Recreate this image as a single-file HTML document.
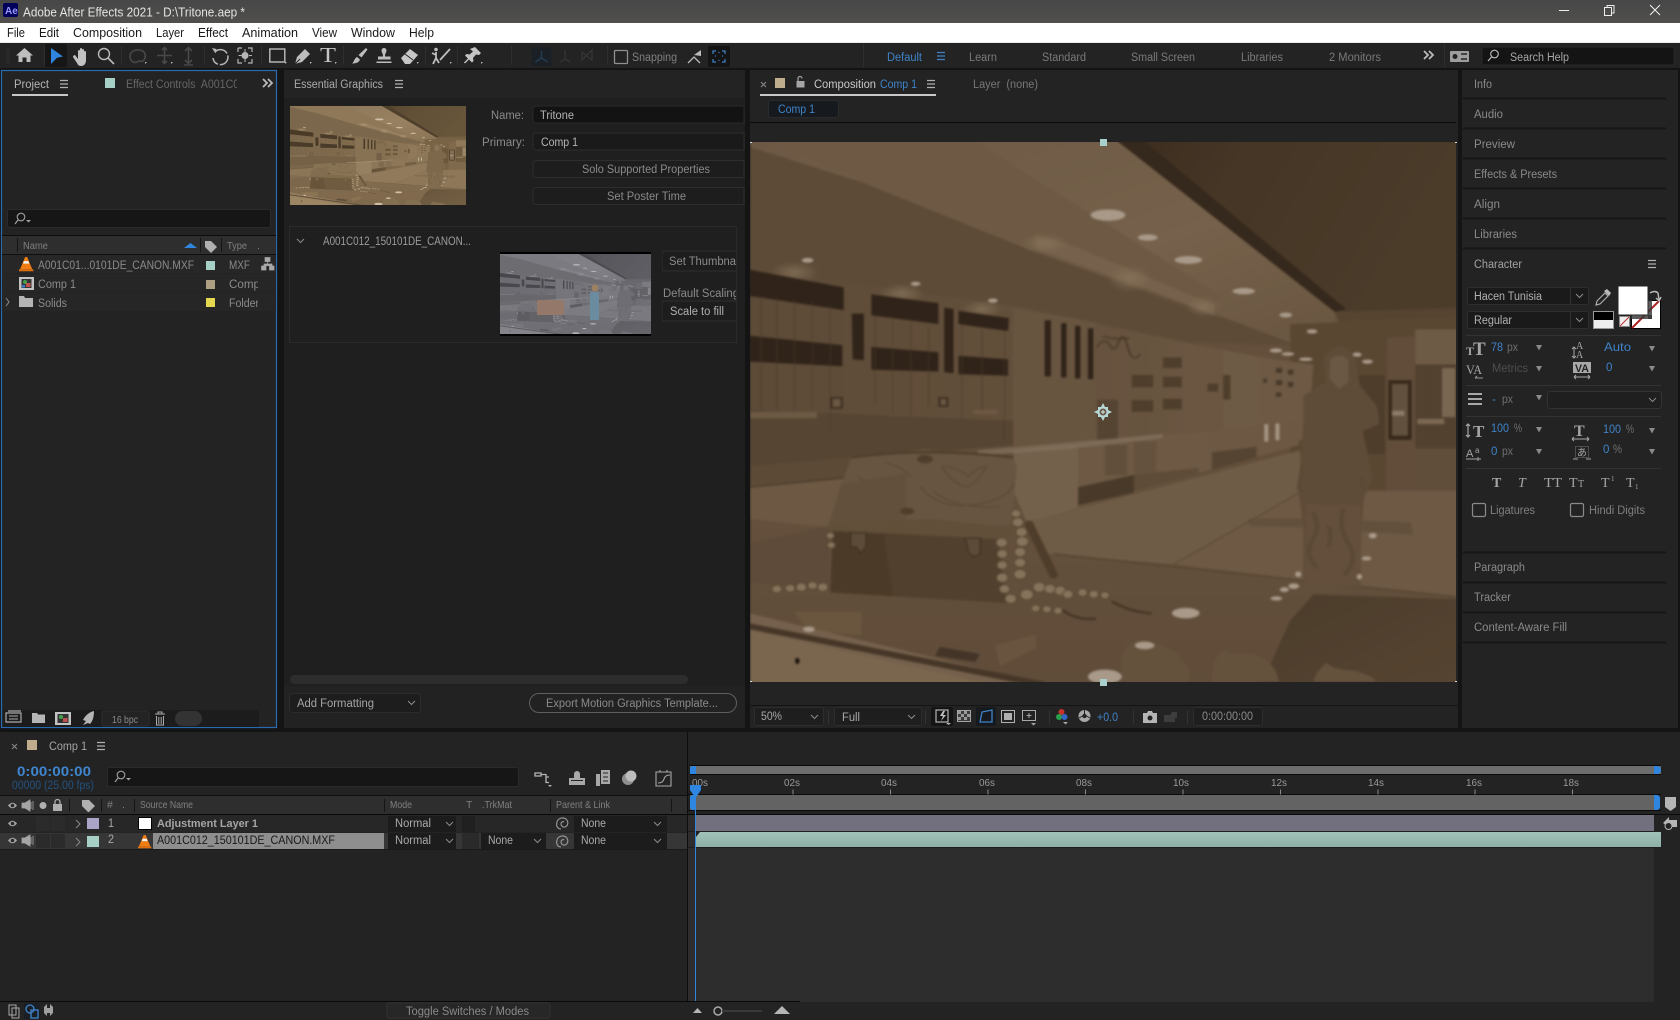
<!DOCTYPE html>
<html lang="en"><head><meta charset="utf-8"><title>Adobe After Effects 2021 - D:\Tritone.aep *</title>
<style>
html,body{margin:0;padding:0;background:#151515;width:1680px;height:1020px;overflow:hidden}
svg{display:block}
text{font-family:"Liberation Sans",sans-serif;font-size:11.5px;fill:#8a8a8a;white-space:pre}
.m{font-size:12.5px;fill:#1a1a1a}
.b{fill:#3f83c9}
.l{fill:#a8a8a8}
.d{fill:#6f6f6f}
.h{font-size:10.5px;fill:#808080}
.s{font-family:"Liberation Serif",serif;font-weight:bold;fill:#a5a5a5}
</style></head><body>
<svg xmlns="http://www.w3.org/2000/svg" width="1680" height="1020" viewBox="0 0 1680 1020">
<defs>
<linearGradient id="gt" x1="0" y1="0" x2="0" y2="1"><stop offset="0" stop-color="#474747"/><stop offset="1" stop-color="#504f4d"/></linearGradient>
<linearGradient id="gw" x1="0" y1="0" x2="1" y2="0"><stop offset="0" stop-color="#675540"/><stop offset=".5" stop-color="#6f5b44"/><stop offset="1" stop-color="#7e6a52"/></linearGradient>
<linearGradient id="gb" x1="0" y1="0" x2="1" y2="1"><stop offset="0" stop-color="#7b6750"/><stop offset=".6" stop-color="#88735a"/><stop offset="1" stop-color="#77634b"/></linearGradient>
<linearGradient id="gc" x1="0" y1="0" x2="1" y2=".3"><stop offset="0" stop-color="#3a2d1f"/><stop offset=".35" stop-color="#483928"/><stop offset="1" stop-color="#50412d"/></linearGradient>
<linearGradient id="gg" x1="0" y1="0" x2="0" y2="1"><stop offset="0" stop-color="#705c46"/><stop offset="1" stop-color="#6a5641"/></linearGradient>
<linearGradient id="gx" x1="0" y1="0" x2="1" y2="1"><stop offset="0" stop-color="#50412f"/><stop offset="1" stop-color="#5f4d38"/></linearGradient>
<radialGradient id="gl"><stop offset="0" stop-color="#a08c70" stop-opacity=".75"/><stop offset="1" stop-color="#a08c70" stop-opacity="0"/></radialGradient>
<linearGradient id="gteal" x1="0" y1="0" x2="0" y2="1"><stop offset="0" stop-color="#a1c2b9"/><stop offset="1" stop-color="#8fb0a7"/></linearGradient>
<filter id="fm" filterUnits="userSpaceOnUse" x="740" y="130" width="730" height="565" color-interpolation-filters="sRGB"><feGaussianBlur stdDeviation="1"/><feColorMatrix type="matrix" values=".76 0 0 0 .057  0 .76 0 0 .04  0 0 .76 0 .028  0 0 0 1 0"/></filter>
<filter id="fp" color-interpolation-filters="sRGB"><feColorMatrix type="matrix" values=".85 0 0 0 .14  0 .85 0 0 .12  0 0 .85 0 .08  0 0 0 1 0"/></filter>
<filter id="fg" color-interpolation-filters="sRGB"><feColorMatrix type="matrix" values=".21 .42 .07 0 .18  .21 .42 .07 0 .18  .21 .42 .08 0 .2  0 0 0 1 0"/></filter>
<clipPath id="cm"><rect x="750" y="142" width="706" height="540"/></clipPath>
<clipPath id="cp"><rect x="290" y="106" width="176" height="99"/></clipPath>
<clipPath id="cg"><rect x="500" y="254" width="151" height="80"/></clipPath>
<clipPath id="c1"><rect x="120" y="70" width="117" height="24"/></clipPath>
<clipPath id="c2"><rect x="662" y="250" width="74" height="75"/></clipPath>
<clipPath id="c3"><rect x="225" y="274" width="33" height="38"/></clipPath>
<g id="ham" fill="none" stroke-width="1.2"><path d="M0 .5h8M0 4h8M0 7.5h8"/></g>
<path id="chev" d="M0 0l3.5 3.5L7 0" fill="none" stroke="#8c8c8c" stroke-width="1"/>
<polygon id="tri" points="0,0 6,0 3,5.5" fill="#8a8a8a"/>
<g id="eye"><path d="M0 4.5Q4.5 -1 9 4.5 4.5 10 0 4.5z" fill="#a5a5a5"/><circle cx="4.5" cy="4.5" r="1.8" fill="#2a2a2a"/></g>
<g id="cone"><polygon points="6,0 8,0 13,12 1,12" fill="#f07d14"/><polygon points="4.7,4 9.3,4 10,6.5 4,6.5" fill="#f3f3f3"/><rect x="0" y="12" width="14" height="2" fill="#e06f10"/></g>
<g id="spiral" fill="none" stroke="#9a9a9a" stroke-width="1.1"><path d="M5 12C1 12 0 8 1 5 2 1 7 0 10 2c3 3 2 7-1 8-2 .5-4-1-4-3 0-2 2-3 3-2"/></g>

<g id="photo">
<rect x="0" y="0" width="1600" height="1568" fill="#6f5b44"/>
<polygon points="0,370 600,480 980,580 1240,640 1240,870 600,885 0,935" fill="url(#gw)"/>
<polygon points="0,770 590,800 590,870 0,935" fill="#5f4e3a"/>
<polygon points="590,480 775,520 775,860 590,875" fill="#76624b"/>
<polygon points="980,580 1060,600 1060,820 980,840" fill="#78644c"/>
<polygon points="1060,600 1140,620 1140,815 1060,825" fill="#7e6a52"/>
<polygon points="0,20 250,120 620,310 1000,490 1150,540 1215,585 980,575 600,475 0,372" fill="#675540"/>
<polygon points="0,0 820,0 1310,490 1310,520 1215,580 1050,500 620,310 250,120 0,20" fill="url(#gb)"/>
<polygon points="290,0 500,0 1050,440 1045,500 620,310 250,120 50,0" fill="#7d6950"/>
<polygon points="640,270 720,300 1040,470 1040,500 900,430 640,310" fill="#88735a"/>
<polygon points="820,0 1600,0 1600,480 1310,490" fill="url(#gc)"/>
<polygon points="820,0 880,0 1335,482 1310,490" fill="#33271b"/>
<polygon points="1310,490 1600,478 1600,505 1320,518" fill="#5e4c37"/>
<polygon points="1210,525 1600,505 1600,1040 1210,1040" fill="#635039"/>
<polygon points="1140,620 1262,640 1250,860 1140,830" fill="#7c6850"/>
<path d="M1178 650h14v14h-14zM1205 655h12v14h-12zM1178 685h14v14h-14zM1205 690h12v14h-12zM1150 680h8v12h-8zM1178 720h12v12h-12z" fill="#4c3d2c"/>
<rect x="1490" y="540" width="110" height="100" fill="#7e6a52"/>
<rect x="1490" y="640" width="110" height="240" fill="#5a4835"/>
<rect x="1490" y="880" width="110" height="125" fill="#6d5943"/>
<rect x="1550" y="650" width="30" height="140" fill="#8d7a62"/>
<rect x="1495" y="795" width="60" height="15" fill="#917d64"/>
<polygon points="1428,565 1490,560 1490,1005 1425,1005" fill="#6c5843"/>
<rect x="1430" y="685" width="52" height="170" fill="#352819"/>
<rect x="1438" y="695" width="36" height="148" fill="#6e5d4a"/>
<rect x="1438" y="772" width="28" height="14" fill="#a5957f"/>
<rect x="1362" y="670" width="60" height="225" fill="#54432f"/>
<ellipse cx="100" cy="378" rx="55" ry="32" fill="url(#gl)"/><ellipse cx="340" cy="438" rx="50" ry="30" fill="url(#gl)"/><ellipse cx="520" cy="482" rx="45" ry="26" fill="url(#gl)"/><ellipse cx="850" cy="395" rx="50" ry="40" fill="url(#gl)"/><ellipse cx="1015" cy="475" rx="40" ry="30" fill="url(#gl)"/><ellipse cx="660" cy="295" rx="55" ry="30" fill="url(#gl)"/>
<g fill="#2c2117">
<polygon points="0,370 210,420 210,485 0,445"/>
<polygon points="0,558 207,585 207,645 0,632"/>
<polygon points="272,440 422,465 422,525 272,500"/>
<polygon points="272,590 422,605 422,660 272,655"/>
<polygon points="228,495 255,495 255,628 230,625"/>
<polygon points="435,478 456,482 456,665 435,662"/>
<polygon points="467,487 580,508 578,545 467,525"/>
<polygon points="467,615 578,625 578,672 467,668"/>
<rect x="660" y="514" width="14" height="160"/><rect x="697" y="522" width="12" height="155"/><rect x="728" y="530" width="12" height="150"/><rect x="757" y="537" width="12" height="145"/>
</g>
<path d="M25 445V770M60 450V770M100 455V770M140 460V770M180 470V830M280 500V750M320 510V780M360 520V790M400 530V760M475 530V800M520 540V780M570 550V860" stroke="#4d3e2c" stroke-width="3" fill="none" opacity=".5"/>
<path d="M776 590q20-30 30-5t20-10 20 15 28 20M790 560q30 10 60 5" stroke="#4d3e2c" stroke-width="4" fill="none"/>
<rect x="0" y="775" width="150" height="18" fill="#7c6850"/><rect x="500" y="770" width="55" height="12" fill="#7c6850"/>
<rect x="180" y="733" width="28" height="33" fill="#3e3023"/><rect x="185" y="738" width="18" height="23" fill="#7a664e"/><rect x="422" y="733" width="22" height="28" fill="#3e3023"/><rect x="427" y="738" width="12" height="18" fill="#7a664e"/>
<g fill="#54442f"><rect x="855" y="670" width="48" height="35"/><rect x="855" y="742" width="48" height="33"/><rect x="925" y="620" width="42" height="30"/><rect x="925" y="675" width="42" height="30"/><rect x="925" y="738" width="42" height="30"/><rect x="1025" y="695" width="24" height="22"/><rect x="1060" y="670" width="16" height="70"/></g>
<rect x="778" y="740" width="46" height="115" fill="#5e4c3a"/>
<polygon points="0,930 230,905 230,960 0,990" fill="#66543f"/>
<polygon points="0,990 230,965 230,1110 0,1082" fill="#7b674f"/>
<path d="M0 990L215 962" stroke="#4c3d2c" stroke-width="3"/>
<polygon points="590,885 735,868 735,1050 620,1090 590,1000" fill="#86725b"/>
<polygon points="735,865 930,840 1030,830 1030,940 735,1048" fill="#7c6850"/>
<rect x="795" y="870" width="50" height="85" fill="#6d5a44"/><rect x="860" y="860" width="50" height="95" fill="#725f48"/>
<polygon points="735,990 860,955 860,1005 735,1042" fill="#4d3e2c"/>
<polygon points="860,955 1005,935 1005,950 860,1000" fill="#685540"/>
<polygon points="1030,830 1230,800 1230,870 1030,940" fill="#7b674f"/>
<polygon points="1035,890 1135,875 1135,905 1035,940" fill="#5e4c38"/>
<polygon points="510,885 720,862 925,838 925,850 720,880 510,900" fill="#a0907a" opacity=".6"/>
<rect x="1152" y="810" width="9" height="50" fill="#c4b6a2"/><rect x="1177" y="808" width="9" height="48" fill="#c4b6a2"/>
<polygon points="620,1090 1232,885 1240,1000 950,1210 660,1180" fill="#7f6b53"/>
<path d="M950 1210L1240 1000" stroke="#5c4b36" stroke-width="4"/>
<polygon points="950,1210 1240,1000 1600,1000 1600,1310" fill="#7c6850"/>
<polygon points="1115,1080 1240,1080 1480,1090 1485,1125 1240,1105 1120,1100" fill="#5f4d39" opacity=".45"/>
<polygon points="0,1080 660,1180 1600,1305 1600,1568 0,1568" fill="url(#gg)"/>
<path d="M680 1180L1600 1305" stroke="#5c4b36" stroke-width="4"/>
<polygon points="1210,1370 1262,1296 1600,1310 1600,1568 1140,1568" fill="url(#gx)"/>
<path d="M835 1545q-15-90 30-120 70 10 95 45 30 35 25 75zM1035 1545q-5-65 30-95 0 20 50 15 60 10 70 80zM1262 1545q5-30 30-55 10 20 60 22 45 15 50 33z" fill="#725e47"/>
<polygon points="100,1345 250,1345 250,1412 130,1400" fill="#786449"/>
<polygon points="550,1440 640,1410 640,1450 560,1500" fill="#776349"/>
<polygon points="0,1350 640,1545 600,1568 0,1400" fill="#86715a"/>
<polygon points="0,1378 660,1545 640,1558 0,1395" fill="#493a2a"/>
<polygon points="0,1398 600,1568 0,1568" fill="#8d785d"/>
<polygon points="425,1445 515,1465 505,1488 415,1470" fill="#45372a"/>
<ellipse cx="106" cy="1485" rx="5" ry="9" fill="#150e08"/>
<polygon points="0,1150 0,1260 178,1280 178,1100" fill="#665340" opacity=".7"/>
<polygon points="228,905 390,882 590,905 598,935 585,1095 540,1105 400,1085 175,1095 205,980" fill="#76634c"/>
<path d="M228 905Q390 875 590 905" stroke="#54442f" stroke-width="7" fill="none"/>
<path d="M380 985q40 70 120 55t90-60M430 930q20 50 60 60 30-30 40-60-30 10-40 30-30-30-60-30zM240 960q40 20 60 80M260 1000q50 20 70 70M300 920q40 10 60 40M410 1000q50 55 150 45" stroke="#655340" stroke-width="4" fill="none"/>
<polygon points="205,980 350,950 350,1090 178,1095" fill="#6c5a45" opacity=".7"/>
<ellipse cx="392" cy="910" rx="18" ry="12" fill="#54442f"/><ellipse cx="352" cy="1058" rx="16" ry="10" fill="#54442f"/>
<polygon points="175,1095 400,1080 585,1105 580,1135 180,1115" fill="#6c5a41"/>
<polygon points="185,1115 555,1138 575,1320 180,1290" fill="#4f3f2b"/>
<polygon points="300,1125 555,1138 575,1320 320,1300" fill="#584733"/>
<path d="M225 1120h35v40l-12 18-10-18h-13zM482 1135h34v45l-14 8-12-10z" fill="#665540" stroke="#3f3122" stroke-width="3"/>
<g fill="#9c8a6e" stroke="#5a4936" stroke-width="2"><circle cx="596" cy="1065" r="11"/><circle cx="600" cy="1090" r="13"/><circle cx="608" cy="1118" r="13"/><circle cx="610" cy="1145" r="14"/><circle cx="605" cy="1175" r="13"/><circle cx="605" cy="1205" r="13"/><circle cx="605" cy="1238" r="14"/><circle cx="564" cy="1148" r="13"/><circle cx="565" cy="1180" r="12"/><circle cx="565" cy="1212" r="12"/><circle cx="565" cy="1248" r="13"/><circle cx="570" cy="1280" r="12"/><circle cx="584" cy="1308" r="13"/><circle cx="620" cy="1296" r="15"/><circle cx="648" cy="1275" r="14"/><circle cx="672" cy="1280" r="13"/><circle cx="695" cy="1285" r="13"/><circle cx="712" cy="1295" r="12"/><circle cx="745" cy="1290" r="11"/><circle cx="770" cy="1295" r="11"/><circle cx="795" cy="1298" r="10"/><circle cx="640" cy="1335" r="10"/><circle cx="665" cy="1338" r="10"/><circle cx="690" cy="1342" r="10"/><circle cx="115" cy="1275" r="12"/><circle cx="140" cy="1270" r="11"/><circle cx="163" cy="1275" r="12"/><circle cx="90" cy="1278" r="11"/><circle cx="60" cy="1280" r="11"/><circle cx="180" cy="1128" r="9"/><circle cx="182" cy="1155" r="9"/></g>
<path d="M625 1095L680 1240" stroke="#54432e" stroke-width="20" stroke-linecap="round" stroke-dasharray="14 5"/>
<path d="M700 1340q30 30 75 25M810 1315q40 30 90 35" stroke="#4a3a28" stroke-width="7" fill="none"/>
<path d="M1285 620Q1300 590 1325 588 1352 595 1358 640L1366 700 1405 760 1410 810 1372 830 1395 960 1375 1020 1370 1100 1365 1280 1240 1260 1240 1100 1228 1000 1240 800 1240 730 1290 690z" fill="#6a5640"/>
<path d="M1300 625Q1320 605 1340 625L1340 690 1320 710 1298 680z" fill="#7a6650"/>
<path d="M1248 1040h120v230h-125z" fill="#6f5b45"/>
<path d="M1260 1060q20 40 0 80t10 80M1330 1050q-15 50 10 100t-10 90M1295 1100q10 20 0 60" stroke="#64523c" stroke-width="10" fill="none"/>
<path d="M1240 1000q-14 0-10-15l8-60M1375 1000l-8-40" stroke="#64523c" stroke-width="8" fill="none"/>
<g fill="#cbbcaa">
<ellipse cx="802" cy="214" rx="39" ry="16"/><ellipse cx="891" cy="278" rx="22" ry="9"/><ellipse cx="982" cy="342" rx="31" ry="11"/><ellipse cx="1106" cy="431" rx="25" ry="9"/><ellipse cx="1200" cy="499" rx="14" ry="7"/><ellipse cx="1259" cy="546" rx="12" ry="6"/><ellipse cx="129" cy="343" rx="13" ry="7"/><ellipse cx="371" cy="410" rx="11" ry="6"/><ellipse cx="544" cy="458" rx="11" ry="6"/><ellipse cx="976" cy="1349" rx="31" ry="15"/><ellipse cx="884" cy="1441" rx="22" ry="11"/><ellipse cx="795" cy="1530" rx="38" ry="20"/><ellipse cx="132" cy="1395" rx="13" ry="8"/><ellipse cx="1179" cy="1307" rx="13" ry="6"/><ellipse cx="1218" cy="1272" rx="12" ry="8"/><ellipse cx="1197" cy="1282" rx="10" ry="7"/><ellipse cx="1381" cy="1193" rx="11" ry="6"/><ellipse cx="1178" cy="600" rx="14" ry="6"/><ellipse cx="1205" cy="610" rx="14" ry="5"/><ellipse cx="1245" cy="625" rx="15" ry="5"/><ellipse cx="1360" cy="612" rx="10" ry="6"/><ellipse cx="1383" cy="632" rx="12" ry="6"/><ellipse cx="1395" cy="1128" rx="9" ry="8"/><ellipse cx="1228" cy="1238" rx="7" ry="8"/><ellipse cx="1365" cy="1245" rx="6" ry="8"/>
</g>
</g>
</defs>

<rect width="1680" height="1020" fill="#141414"/>
<!-- title bar -->
<rect width="1680" height="23" fill="url(#gt)"/>
<rect x="3" y="3" width="15" height="14" rx="2" fill="#00005b"/>
<text x="5" y="14" style="font-size:10px;font-weight:bold;fill:#9999ff">Ae</text>
<text x="23" y="16.5" textLength="222" lengthAdjust="spacingAndGlyphs" style="font-size:13px;fill:#e4e4e4">Adobe After Effects 2021 - D:\Tritone.aep *</text>
<path d="M1559 10.5h10" stroke="#eee" stroke-width="1"/>
<path d="M1604.5 7.5h7v8h-7zM1607 7.5V5.5h7v7.5h-2.5" fill="none" stroke="#eee" stroke-width="1"/>
<path d="M1650 5l10 10M1660 5l-10 10" stroke="#eee" stroke-width="1"/>
<!-- menu -->
<rect y="23" width="1680" height="19" fill="#fff"/><rect y="42" width="1680" height="1" fill="#ececec"/>
<g>
<text class="m" x="7" y="37" textLength="18" lengthAdjust="spacingAndGlyphs">File</text>
<text class="m" x="39" y="37" textLength="20" lengthAdjust="spacingAndGlyphs">Edit</text>
<text class="m" x="73" y="37" textLength="69" lengthAdjust="spacingAndGlyphs">Composition</text>
<text class="m" x="156" y="37" textLength="28" lengthAdjust="spacingAndGlyphs">Layer</text>
<text class="m" x="198" y="37" textLength="30" lengthAdjust="spacingAndGlyphs">Effect</text>
<text class="m" x="242" y="37" textLength="56" lengthAdjust="spacingAndGlyphs">Animation</text>
<text class="m" x="312" y="37" textLength="25" lengthAdjust="spacingAndGlyphs">View</text>
<text class="m" x="351" y="37" textLength="44" lengthAdjust="spacingAndGlyphs">Window</text>
<text class="m" x="409" y="37" textLength="25" lengthAdjust="spacingAndGlyphs">Help</text>
</g>
<!-- toolbar -->
<rect y="43" width="1680" height="25" fill="#232323"/>
<rect x="45" y="44" width="22" height="23" rx="2" fill="#161616"/>
<path d="M7 49v16M9 49v16" stroke="#3a3a3a" stroke-dasharray="1 1"/>
<path d="M44.500 46v19M121.500 46v19M204.500 46v19M261.500 46v19M343.500 46v19M425.500 46v19M457.500 46v19M511.500 46v19M607.500 46v19M863.500 44v23M1444.500 44v23" stroke="#2f2f2f"/>
<path d="M24.500 48L33 55.500h-2.500V62h-4v-4.500h-4V62h-4v-6.500H16z" fill="#bdbdbd"/>
<path d="M51 48l12 8.500-6 1.200-6 6.300z" fill="#2f86e0"/>
<path d="M75 55l3 4v-8a1 1 0 012 0v5-7a1 1 0 012 0v7-6a1 1 0 012 0v6-4a1 1 0 012 0v8c0 4-2 6-5 6-2 0-3-1-4-3l-4-6c0-1 1-2 2-2z" fill="#c2c2c2"/>
<circle cx="104" cy="54" r="5.5" fill="none" stroke="#bbb" stroke-width="1.4"/><path d="M108 58l6 6" stroke="#bbb" stroke-width="1.6"/>
<g fill="none" stroke="#484848" stroke-width="1.6"><path d="M130 56c0-4 5-7 10-6s6 5 5 8-3 4-6 3c-4 3-9 1-9-5z"/><path d="M164.500 48v15M157 55.500h15M162 50l2.500-2.500L167 50M162 61l2.500 2.500L167 61"/><path d="M188.500 48v15M185 51l3.500-3.500L192 51M185 60l3.500 3.500L192 60M184 65h9" /></g>
<path d="M215 52a7.500 7.500 0 11-2 6" fill="none" stroke="#b5b5b5" stroke-width="1.5" stroke-dasharray="14 2"/><path d="M212 48l4.500 1-1 4.500z" fill="#b5b5b5"/>
<path d="M238 48h4M248 48h4v4M252 59v4h-4M242 63h-4v-4M238 52v-4" fill="none" stroke="#b5b5b5" stroke-width="1.2"/><circle cx="245" cy="55.500" r="3.500" fill="#b5b5b5"/><path d="M238.500 55.500h3M252 55.500h-3M245 49v3M245 62v-3" stroke="#b5b5b5"/>
<rect x="269.800" y="49" width="15" height="13" fill="none" stroke="#bdbdbd" stroke-width="1.4"/>
<path d="M287 62h-2v2zM312 62h-2v2zM337 62h-2v2zM419 62h-2v2zM452 62h-2v2zM483 62h-2v2zM173 62h-2v2zM147 62h-2v2z" fill="#bbb"/>
<path d="M295 64l2-7 8-8 5 5-8 8z" fill="#bdbdbd"/><path d="M295 64l5-5" stroke="#232323"/>
<text class="s" x="320" y="62" textLength="16" lengthAdjust="spacingAndGlyphs" style="font-size:21px;font-weight:normal;fill:#c4c4c4">T</text>
<path d="M366 48l1.500 1.500-6 8-3-2.500zM357 57l3 2.500c-1 3-4 4-8 4 2-1 2-5 5-6.500z" fill="#bdbdbd"/>
<path d="M384 48a2.500 2.500 0 012.500 2.500c0 2-1.500 2.500-1.500 6h5.500v3H378v-3h5c0-3.500-1.500-4-1.500-6A2.500 2.500 0 01384 48zM376.500 61.500h15v1.500h-15z" fill="#bdbdbd"/>
<path d="M401 58l9-9 8 6-8 9h-5z" fill="#c6c6c6"/><path d="M405 54l8 6" stroke="#232323"/>
<circle cx="436" cy="49.500" r="1.800" fill="#bdbdbd"/><path d="M436 52v6l-3 6M436 55l-4-2M436 58l3 5M440 60l10-11" stroke="#bdbdbd" stroke-width="1.8" fill="none"/>
<path d="M470 49l5-2 6 6-2 2-3-.5-3 3.500.5 3-1.500 1.500-3-3-4 4-1-1 4-4-3-3 1.500-1.500 3 .5 3.500-3z" fill="#c4c4c4"/>
<rect x="531.500" y="47" width="20" height="19" rx="2" fill="#1b2026"/>
<path d="M541.500 51v7M541.500 58l-6 4M541.500 58l6 4" stroke="#243d52" stroke-width="1.4"/>
<path d="M560 62l5-3 5 3M565 50v9M582 52l10 8v-10l-10 10z" stroke="#3a3a3a" fill="none"/>
<rect x="614.500" y="50.500" width="13" height="13" rx="1" fill="none" stroke="#909090" stroke-width="1.3"/>
<text class="d" x="632" y="61" textLength="45" lengthAdjust="spacingAndGlyphs" style="fill:#7f7f7f">Snapping</text>
<path d="M688 63l6-6 6 6" stroke="#bbb" stroke-width="1.3" fill="none"/><path d="M694 55l7-5v6z" fill="#bbb"/>
<rect x="708" y="46" width="22" height="21" rx="2" fill="#141414"/>
<path d="M713 54v-3h3M725 54v-3h-3M713 59v3h3M725 59v3h-3M719 52v1M719 60v1M715 56h1M722 56h1" stroke="#3f83c9" stroke-width="1.2" fill="none"/>
<text class="b" x="887" y="61" textLength="35" lengthAdjust="spacingAndGlyphs">Default</text>
<use href="#ham" x="937" y="52" stroke="#3f83c9"/>
<text x="969" y="61" textLength="28" lengthAdjust="spacingAndGlyphs" style="fill:#7a7a7a">Learn</text>
<text x="1042" y="61" textLength="44" lengthAdjust="spacingAndGlyphs" style="fill:#7a7a7a">Standard</text>
<text x="1131" y="61" textLength="64" lengthAdjust="spacingAndGlyphs" style="fill:#7a7a7a">Small Screen</text>
<text x="1241" y="61" textLength="42" lengthAdjust="spacingAndGlyphs" style="fill:#7a7a7a">Libraries</text>
<text x="1329" y="61" textLength="52" lengthAdjust="spacingAndGlyphs" style="fill:#7a7a7a">2 Monitors</text>
<path d="M1424 51l4 4-4 4M1429 51l4 4-4 4" fill="none" stroke="#bbb" stroke-width="1.8"/>
<rect x="1450" y="51" width="19" height="11" rx="1" fill="#9e9e9e"/><circle cx="1455" cy="56.500" r="2.500" fill="#232323"/><path d="M1461 54h6M1461 59h6" stroke="#232323" stroke-width="1.4"/>
<rect x="1482" y="47" width="192" height="18" rx="2" fill="#141414" stroke="#2a2a2a"/>
<circle cx="1494.500" cy="54" r="3.800" fill="none" stroke="#bbb" stroke-width="1.1"/><path d="M1491.500 57l-3.500 4" stroke="#bbb" stroke-width="1.2"/>
<text x="1510" y="61" textLength="59" lengthAdjust="spacingAndGlyphs" style="fill:#a5a5a5">Search Help</text>

<!-- project panel -->
<rect x="1.500" y="70.500" width="275" height="657" fill="#232323" stroke="#2a6bb0" stroke-width="1.2"/>
<text x="14" y="88" textLength="35" lengthAdjust="spacingAndGlyphs" style="fill:#b4b4b4">Project</text>
<use href="#ham" x="60" y="80" stroke="#b0b0b0"/>
<rect x="12" y="94" width="56" height="2" fill="#c8c8c8"/>
<rect x="105" y="78" width="10" height="10" fill="#a6cfc6"/>
<g clip-path="url(#c1)"><text x="126" y="88" textLength="125" lengthAdjust="spacingAndGlyphs" style="fill:#666">Effect Controls  A001C012</text></g>
<path d="M263 79l4 4-4 4M268 79l4 4-4 4" fill="none" stroke="#bbb" stroke-width="1.8"/>
<rect x="7.500" y="209.500" width="263" height="18" rx="2" fill="#161616" stroke="#2a2a2a"/>
<circle cx="21" cy="217" r="3.800" fill="none" stroke="#a0a0a0" stroke-width="1.1"/><path d="M18 220l-3 4" stroke="#a0a0a0" stroke-width="1.2"/><path d="M26 220h5l-2.500 2.500z" fill="#a0a0a0"/>
<rect x="2" y="235" width="274" height="1" fill="#0c0c0c"/>
<rect x="2" y="236" width="274" height="18" fill="#2e2e2e"/>
<rect x="2" y="254" width="274" height="1" fill="#0f0f0f"/>
<path d="M17.500 238v14M200.500 238v14M221.500 238v14" stroke="#151515"/>
<text class="h" x="23" y="249" textLength="25" lengthAdjust="spacingAndGlyphs">Name</text>
<polygon points="184,248 197,248 190.500,243" fill="#2f86e0"/>
<path d="M205 241l6 0 6 6-1 1-5 5-6-6z" fill="#b0b0b0"/>
<text class="h" x="227" y="249" textLength="20" lengthAdjust="spacingAndGlyphs">Type</text><text class="h" x="257" y="249">.</text>
<rect x="2" y="255" width="274" height="18" fill="#272727"/>
<rect x="2" y="274" width="274" height="18" fill="#262626"/>
<rect x="2" y="293" width="274" height="18" fill="#262626"/>
<g transform="translate(19 257) scale(1.02)"><use href="#cone"/></g>
<text x="38" y="269" textLength="156" lengthAdjust="spacingAndGlyphs">A001C01...0101DE_CANON.MXF</text>
<rect x="206" y="261" width="9" height="9" fill="#a6cfc6"/>
<text x="229" y="269" textLength="21" lengthAdjust="spacingAndGlyphs">MXF</text>
<path d="M265 257.500h5v4h-5zM261.500 266h4.500v4h-4.500zM269.500 266h4.500v4h-4.500zM267.500 261.500v2.500M264 266v-2h8v2" fill="#a8a8a8" stroke="#a8a8a8" stroke-width=".7"/>
<rect x="19" y="277" width="15" height="13" fill="#c2c2c2"/><rect x="21.500" y="279" width="10" height="9" fill="#333"/><circle cx="25" cy="282" r="2" fill="#42a14b"/><rect x="26" y="283" width="4.500" height="4" fill="#c0504d"/><rect x="22" y="285" width="3" height="2.500" fill="#3a7bd0"/>
<text x="38" y="288" textLength="38" lengthAdjust="spacingAndGlyphs">Comp 1</text>
<rect x="206" y="280" width="9" height="9" fill="#ad9f82"/>
<g clip-path="url(#c3)"><text x="229" y="288" textLength="31" lengthAdjust="spacingAndGlyphs">Comp</text>
<text x="229" y="307" textLength="30" lengthAdjust="spacingAndGlyphs">Folder</text></g>
<path d="M6 298l3 4-3 4" fill="none" stroke="#8c8c8c"/>
<path d="M19 296h5l1 2h8v9H19z" fill="#b5b5b5"/>
<text x="38" y="307" textLength="29" lengthAdjust="spacingAndGlyphs">Solids</text>
<rect x="206" y="298" width="9" height="9" fill="#e3d84f"/>
<rect x="3" y="710" width="256" height="17" fill="#1c1c1c"/>
<path d="M6 713h15v9H6zM8 711h13" fill="none" stroke="#aaa" stroke-width="1.2"/><path d="M9 716h9M9 719h9" stroke="#aaa"/>
<path d="M32 713h5l1 1.500h7V723H32z" fill="#b5b5b5"/>
<rect x="55" y="712" width="16" height="13" fill="#c2c2c2"/><rect x="57.500" y="714" width="11" height="9" fill="#333"/><circle cx="61" cy="717" r="2" fill="#42a14b"/><rect x="63" y="718" width="4.500" height="4" fill="#c0504d"/>
<path d="M94 711c-5 1-9 5-11 9l3 1-3 4 5-2 2 1c3-3 4-8 4-13z" fill="#b5b5b5"/>
<rect x="102" y="711" width="47" height="15" rx="2" fill="#232323" stroke="#2c2c2c"/>
<text x="112" y="723" textLength="26" lengthAdjust="spacingAndGlyphs" style="font-size:10.500px;fill:#8a8a8a">16 bpc</text>
<path d="M155 714h10M158 714v-2h4v2M156.500 716v9h7v-9M158.800 717v7M161.200 717v7" fill="none" stroke="#aaa" stroke-width="1"/>
<rect x="175" y="711" width="27" height="15" rx="7.500" fill="#333"/>

<!-- essential graphics -->
<rect x="284" y="70" width="461" height="658" fill="#232323"/>
<rect x="284" y="98" width="461" height="630" fill="#1f1f1f"/>
<rect x="284" y="686" width="461" height="42" fill="#222"/>
<text x="294" y="88" textLength="89" lengthAdjust="spacingAndGlyphs" style="fill:#ababab">Essential Graphics</text>
<use href="#ham" x="395" y="80" stroke="#b0b0b0"/>
<g clip-path="url(#cp)"><use href="#photo" transform="translate(290 105.600) scale(.1113 .0643)" filter="url(#fp)"/></g>
<text x="491" y="119" textLength="33" lengthAdjust="spacingAndGlyphs">Name:</text>
<text x="482" y="146" textLength="43" lengthAdjust="spacingAndGlyphs">Primary:</text>
<path d="M744 106H536a3 3 0 00-3 3v11a3 3 0 003 3h208z" fill="#131313" stroke="#2a2a2a"/>
<text x="540" y="119" textLength="34" lengthAdjust="spacingAndGlyphs" style="fill:#b5b5b5">Tritone</text>
<path d="M744 133H536a3 3 0 00-3 3v11a3 3 0 003 3h208z" fill="#1a1a1a" stroke="#2c2c2c"/>
<text x="541" y="146" textLength="37" lengthAdjust="spacingAndGlyphs" style="fill:#b5b5b5">Comp 1</text>
<path d="M744 160.500H536a3 3 0 00-3 3v11a3 3 0 003 3h208z" fill="#1d1d1d" stroke="#2e2e2e"/>
<text x="582" y="173" textLength="128" lengthAdjust="spacingAndGlyphs">Solo Supported Properties</text>
<path d="M744 187.500H536a3 3 0 00-3 3v11a3 3 0 003 3h208z" fill="#1d1d1d" stroke="#2e2e2e"/>
<text x="607" y="200" textLength="79" lengthAdjust="spacingAndGlyphs">Set Poster Time</text>
<rect x="289.500" y="226.500" width="447" height="116" fill="none" stroke="#2a2a2a"/>
<use href="#chev" x="297" y="239"/>
<text x="323" y="245" textLength="148" lengthAdjust="spacingAndGlyphs" style="fill:#9c9c9c">A001C012_150101DE_CANON...</text>
<rect x="500" y="252" width="151" height="84" fill="#000"/>
<g clip-path="url(#cg)"><use href="#photo" transform="translate(500 253.700) scale(.0954 .052)" filter="url(#fg)"/>
<rect x="590" y="292" width="9" height="28" fill="#6a8ba0"/><circle cx="595" cy="288" r="3.500" fill="#9d8062"/><rect x="537" y="300" width="27" height="15" fill="#94786a"/></g>
<g clip-path="url(#c2)">
<rect x="662" y="251" width="90" height="20" rx="3" fill="#1d1d1d" stroke="#2e2e2e"/>
<text x="669" y="265" textLength="72" lengthAdjust="spacingAndGlyphs">Set Thumbnail</text>
<text x="663" y="297" textLength="76" lengthAdjust="spacingAndGlyphs">Default Scaling</text>
<rect x="662" y="301" width="90" height="20" rx="3" fill="#1d1d1d" stroke="#2e2e2e"/>
<text x="670" y="315" textLength="54" lengthAdjust="spacingAndGlyphs" style="fill:#b0b0b0">Scale to fill</text>
</g>
<rect x="290" y="675" width="398" height="9" rx="4.500" fill="#2d2d2d"/>
<rect x="289.500" y="693.500" width="131" height="19" rx="3" fill="#1d1d1d" stroke="#2c2c2c"/>
<text x="297" y="707" textLength="77" lengthAdjust="spacingAndGlyphs" style="fill:#a5a5a5">Add Formatting</text>
<use href="#chev" x="408" y="701"/>
<rect x="529.500" y="693.500" width="207" height="19" rx="9.500" fill="none" stroke="#5f5f5f"/>
<text x="546" y="707" textLength="172" lengthAdjust="spacingAndGlyphs">Export Motion Graphics Template...</text>

<!-- composition panel -->
<rect x="750" y="70" width="708" height="658" fill="#232323"/>
<path d="M761 87l5-5M761 82l5 5" stroke="#8a8a8a"/>
<rect x="775" y="78" width="10" height="10" fill="#bfad8c"/>
<path d="M796.500 81h8v6.500h-8z" fill="#a5a5a5"/><path d="M798 81v-2.500a2 2 0 014 0" fill="none" stroke="#a5a5a5" stroke-width="1.2"/>
<text x="814" y="88" textLength="62" lengthAdjust="spacingAndGlyphs" style="fill:#c8c8c8">Composition</text>
<text class="b" x="880" y="88" textLength="37" lengthAdjust="spacingAndGlyphs">Comp 1</text>
<use href="#ham" x="927" y="80" stroke="#b0b0b0"/>
<rect x="760" y="94" width="176" height="2" fill="#c8c8c8"/>
<text x="973" y="88" textLength="65" lengthAdjust="spacingAndGlyphs" style="fill:#777">Layer  (none)</text>
<rect x="768.500" y="100.500" width="70" height="17" rx="2" fill="#161a1e" stroke="#2a2a2a"/>
<text class="b" x="778" y="113" textLength="37" lengthAdjust="spacingAndGlyphs">Comp 1</text>
<rect x="750" y="122" width="706" height="1" fill="#0b0b0b"/>
<g clip-path="url(#cm)"><g filter="url(#fm)"><use href="#photo" transform="translate(750 140) scale(.44643 .35075)"/></g></g>
<path d="M750 142h2v1h-2zM1455 142h2v1h-2zM750 681h2v1h-2zM1455 681h2v1h-2z" fill="#ddd"/>
<rect x="1100" y="139" width="7" height="7" fill="#a9d0cc"/><rect x="1100" y="679" width="7" height="7" fill="#a9d0cc"/>
<g transform="translate(1103 412)"><path d="M0-9L2-5 5-5 5-2 9 0 5 2 5 5 2 5 0 9-2 5-5 5-5 2-9 0-5-2-5-5-2-5z" fill="#b6d9d7"/><circle r="3.500" fill="#6b5a4a"/><path d="M-2 0h4M0-2v4" stroke="#d6ecea"/></g>
<rect x="750" y="705" width="708" height="1" fill="#141414"/>
<rect x="754.500" y="707.500" width="69" height="18" rx="2" fill="#1e1e1e" stroke="#2d2d2d"/>
<text x="761" y="720" textLength="21" lengthAdjust="spacingAndGlyphs" style="fill:#a8a8a8">50%</text>
<use href="#chev" x="811" y="715"/>
<path d="M828.500 710v14M925.500 710v14M1049.500 710v14M1133.500 710v14M1187.500 710v14" stroke="#333"/>
<rect x="834.500" y="707.500" width="87" height="18" rx="2" fill="#1e1e1e" stroke="#2d2d2d"/>
<text x="842" y="721" textLength="18" lengthAdjust="spacingAndGlyphs" style="fill:#a8a8a8">Full</text>
<use href="#chev" x="908" y="715"/>
<rect x="931" y="707" width="22" height="19" rx="2" fill="#141414"/>
<rect x="936" y="710" width="12" height="12" fill="none" stroke="#b5b5b5" stroke-width="1.2"/><path d="M943 711l-3 5h3l-2 5 5-6h-3l2-4z" fill="#c2c2c2"/><path d="M946 723h5l-2.500 2z" fill="#b5b5b5"/>
<rect x="957.500" y="710.500" width="13" height="11" fill="#3c3c3c" stroke="#a5a5a5"/><path d="M958 711h3v3h-3zM964 711h3v3h-3zM961 714h3v3h-3zM967 714h3v3h-3zM958 717h3v3h-3zM964 717h3v3h-3z" fill="#9a9a9a"/>
<rect x="976" y="707" width="20" height="19" rx="2" fill="#161a1e"/>
<path d="M980 722l2-10 10-2v12z" fill="none" stroke="#3f83c9" stroke-width="1.300"/>
<rect x="1001.500" y="710.500" width="13" height="12" fill="none" stroke="#b0b0b0"/><rect x="1004" y="713" width="8" height="7" fill="#b0b0b0"/>
<rect x="1022.500" y="710.500" width="13" height="10" fill="none" stroke="#a8a8a8"/><path d="M1029 713v5M1026.500 715.500h5" stroke="#a8a8a8"/><path d="M1031 723h5l-2.500 2.500z" fill="#a8a8a8"/>
<circle cx="1061.500" cy="712" r="3" fill="#c4342d"/><circle cx="1059" cy="717" r="3" fill="#2aa04b"/><circle cx="1064.500" cy="717" r="3" fill="#3266c8"/><path d="M1063 722h5l-2.500 2.500z" fill="#a8a8a8"/>
<circle cx="1084.500" cy="716" r="6" fill="#a8a8a8"/><circle cx="1084.500" cy="716" r="2.200" fill="#232323"/><path d="M1084.500 710v4M1079 718l3.500-2M1090 718l-3.500-2" stroke="#232323"/>
<text class="b" x="1097" y="721" textLength="21" lengthAdjust="spacingAndGlyphs">+0.0</text>
<path d="M1143 713h4l1-2h4l1 2h4v10h-14z" fill="#b5b5b5"/><circle cx="1150" cy="718" r="2.500" fill="#232323"/>
<path d="M1164 715h6l2-3h5v6h-2v4h-11z" fill="#3d3d3d"/>
<rect x="1193.500" y="707.500" width="69" height="18" rx="2" fill="#1e1e1e" stroke="#2d2d2d"/>
<text x="1202" y="720" textLength="51" lengthAdjust="spacingAndGlyphs">0:00:00:00</text>

<!-- right panels -->
<rect x="1462" y="70" width="216" height="658" fill="#232323"/>
<path d="M1463 98.500h203M1463 128.500h203M1463 158.500h203M1463 188.500h203M1463 218.500h203M1463 248.500h203M1463 552.500h203M1463 582.500h203M1463 612.500h203M1463 642.500h203" stroke="#161616" stroke-width="2"/>
<g>
<text x="1474" y="88" textLength="18" lengthAdjust="spacingAndGlyphs">Info</text>
<text x="1474" y="118" textLength="29" lengthAdjust="spacingAndGlyphs">Audio</text>
<text x="1474" y="148" textLength="41" lengthAdjust="spacingAndGlyphs">Preview</text>
<text x="1474" y="178" textLength="83" lengthAdjust="spacingAndGlyphs">Effects &amp; Presets</text>
<text x="1474" y="208" textLength="26" lengthAdjust="spacingAndGlyphs">Align</text>
<text x="1474" y="238" textLength="43" lengthAdjust="spacingAndGlyphs">Libraries</text>
<text x="1474" y="268" textLength="48" lengthAdjust="spacingAndGlyphs" style="fill:#a2a2a2">Character</text>
<text x="1474" y="571" textLength="51" lengthAdjust="spacingAndGlyphs">Paragraph</text>
<text x="1474" y="601" textLength="37" lengthAdjust="spacingAndGlyphs">Tracker</text>
<text x="1474" y="631" textLength="93" lengthAdjust="spacingAndGlyphs">Content-Aware Fill</text>
</g>
<use href="#ham" x="1648" y="260" stroke="#b0b0b0"/>
<rect x="1467.500" y="287.500" width="121" height="17" rx="2" fill="#1a1a1a" stroke="#2e2e2e"/><path d="M1570.500 288v16" stroke="#333"/>
<text x="1474" y="300" textLength="68" lengthAdjust="spacingAndGlyphs" style="fill:#b2b2b2">Hacen Tunisia</text><use href="#chev" x="1576" y="294"/>
<rect x="1467.500" y="311.500" width="121" height="17" rx="2" fill="#1a1a1a" stroke="#2e2e2e"/><path d="M1570.500 312v16" stroke="#333"/>
<text x="1474" y="324" textLength="38" lengthAdjust="spacingAndGlyphs" style="fill:#b2b2b2">Regular</text><use href="#chev" x="1576" y="318"/>
<path d="M1596 305l1-4 8-8 3 3-8 8z" fill="none" stroke="#aaa" stroke-width="1.2"/><path d="M1604 291l3-2 4 4-2 3z" fill="#bbb"/>
<rect x="1631.500" y="300.500" width="29" height="28" fill="#fff" stroke="#000"/><path d="M1632 328l28-28" stroke="#b02020" stroke-width="2"/>
<rect x="1618" y="286" width="30" height="29" fill="#fff" stroke="#232323"/>
<rect x="1648" y="300" width="4" height="19" fill="#333" opacity=".8"/><rect x="1631" y="315" width="21" height="4" fill="#333" opacity=".8"/>
<path d="M1650 293q5-3 8 0l1 7M1656 298l3 3 2-4" fill="none" stroke="#bbb" stroke-width="1.4"/>
<rect x="1593.500" y="311.500" width="20" height="17" fill="#eee" stroke="#999"/><rect x="1594" y="312" width="19" height="8" fill="#000"/>
<rect x="1619.500" y="316.500" width="10" height="10" fill="#eee" stroke="#888"/><path d="M1620 326l9-9" stroke="#c03030"/>
<path d="M1466 335.500h195M1466 385.500h195M1466 416.500h195M1466 468.500h195" stroke="#333"/>
<text class="s" x="1466" y="355" style="font-size:12px">T</text><text class="s" x="1473" y="355" style="font-size:19px">T</text>
<text class="b" x="1491" y="351" textLength="12" lengthAdjust="spacingAndGlyphs">78</text><text class="d" x="1507" y="351" textLength="11" lengthAdjust="spacingAndGlyphs">px</text>
<use href="#tri" x="1536" y="345"/><use href="#tri" x="1649" y="346"/>
<text class="s" x="1576" y="349" style="font-size:10px;font-weight:normal">A</text><text class="s" x="1576" y="358" style="font-size:10px;font-weight:normal">A</text><path d="M1574 347v11M1572 349l2-2 2 2M1572 356l2 2 2-2" stroke="#a5a5a5" fill="none"/>
<text class="b" x="1604" y="351" textLength="27" lengthAdjust="spacingAndGlyphs">Auto</text>
<text class="s" x="1466" y="374" style="font-size:13px;font-weight:normal" textLength="16" lengthAdjust="spacingAndGlyphs">VA</text><path d="M1475 378h8M1475 378l2-2" stroke="#9a9a9a" fill="none"/>
<text x="1492" y="372" textLength="36" lengthAdjust="spacingAndGlyphs" style="fill:#4e4e4e">Metrics</text><use href="#tri" x="1536" y="366"/>
<rect x="1573" y="362" width="18" height="11" fill="#a8a8a8"/><text x="1575" y="372" textLength="14" lengthAdjust="spacingAndGlyphs" style="font-weight:bold;font-size:11px;fill:#232323">VA</text><path d="M1574 377h16M1574 377l2-2M1574 377l2 2M1590 377l-2-2M1590 377l-2 2" stroke="#a8a8a8" fill="none"/>
<text class="b" x="1606" y="371">0</text><use href="#tri" x="1649" y="366"/>
<path d="M1468 394h14M1468 399h14M1468 404h14" stroke="#a8a8a8" stroke-width="2"/>
<text class="b" x="1492" y="403">-</text><text class="d" x="1502" y="403" textLength="11" lengthAdjust="spacingAndGlyphs">px</text><use href="#tri" x="1536" y="395"/>
<rect x="1547.500" y="391.500" width="114" height="17" rx="3" fill="#1f1f1f" stroke="#333"/><use href="#chev" x="1649" y="398"/>
<path d="M1468 424v13M1466 426l2-2 2 2M1466 435l2 2 2-2" stroke="#a8a8a8" fill="none" stroke-width="1.2"/><text class="s" x="1473" y="437" style="font-size:17px">T</text>
<text class="b" x="1491" y="432" textLength="18" lengthAdjust="spacingAndGlyphs">100</text><text class="d" x="1514" y="432" textLength="8" lengthAdjust="spacingAndGlyphs">%</text><use href="#tri" x="1536" y="427"/>
<text class="s" x="1574" y="436" style="font-size:16px">T</text><path d="M1572 439h17M1572 439l2-2M1572 439l2 2M1589 439l-2-2M1589 439l-2 2" stroke="#a8a8a8" fill="none"/>
<text class="b" x="1603" y="433" textLength="18" lengthAdjust="spacingAndGlyphs">100</text><text class="d" x="1626" y="433" textLength="8" lengthAdjust="spacingAndGlyphs">%</text><use href="#tri" x="1649" y="428"/>
<text x="1466" y="457" style="font-size:11px;fill:#a5a5a5">A</text><text x="1475" y="453" style="font-size:8px;fill:#a5a5a5">a</text><path d="M1466 459h15M1478 461v-4" stroke="#a5a5a5" fill="none"/>
<text class="b" x="1491" y="455">0</text><text class="d" x="1502" y="455" textLength="11" lengthAdjust="spacingAndGlyphs">px</text><use href="#tri" x="1536" y="449"/>
<text x="1577" y="456" style="font-family:'Liberation Sans','Noto Sans CJK JP',sans-serif;font-size:10px;fill:#a5a5a5">あ</text><rect x="1575.500" y="446.500" width="13" height="11" fill="none" stroke="#777" stroke-dasharray="1 1"/><path d="M1573 459h5M1586 459h5" stroke="#a5a5a5"/>
<text class="b" x="1603" y="453">0</text><text class="d" x="1613" y="453" textLength="9" lengthAdjust="spacingAndGlyphs">%</text><use href="#tri" x="1649" y="449"/>
<text class="s" x="1492" y="487" style="font-size:14px">T</text>
<text class="s" x="1518" y="487" style="font-size:14px;font-style:italic;font-weight:normal">T</text>
<text class="s" x="1544" y="487" style="font-size:14px;font-weight:normal" textLength="18" lengthAdjust="spacingAndGlyphs">TT</text>
<text class="s" x="1569" y="487" style="font-size:14px;font-weight:normal">T</text><text class="s" x="1578" y="487" style="font-size:10px;font-weight:normal">T</text>
<text class="s" x="1601" y="487" style="font-size:14px;font-weight:normal">T</text><text class="s" x="1611" y="481" style="font-size:7px;font-weight:normal">1</text>
<text class="s" x="1626" y="487" style="font-size:14px;font-weight:normal">T</text><text class="s" x="1635" y="489" style="font-size:7px;font-weight:normal">1</text>
<rect x="1472.500" y="503.500" width="13" height="13" rx="1.500" fill="none" stroke="#8a8a8a" stroke-width="1.200"/>
<text x="1490" y="514" textLength="45" lengthAdjust="spacingAndGlyphs" style="fill:#7f7f7f">Ligatures</text>
<rect x="1570.500" y="503.500" width="13" height="13" rx="1.500" fill="none" stroke="#8a8a8a" stroke-width="1.200"/>
<text x="1589" y="514" textLength="56" lengthAdjust="spacingAndGlyphs" style="fill:#7f7f7f">Hindi Digits</text>

<!-- timeline -->
<rect y="732" width="1680" height="288" fill="#232323"/>
<path d="M12 749l5-5M12 744l5 5" stroke="#8a8a8a"/>
<rect x="27" y="740" width="10" height="10" fill="#bfad8c"/>
<text x="49" y="750" textLength="38" lengthAdjust="spacingAndGlyphs" style="fill:#a5a5a5">Comp 1</text>
<use href="#ham" x="97" y="742" stroke="#b0b0b0"/>
<text x="17" y="776" textLength="74" lengthAdjust="spacingAndGlyphs" style="font-size:14px;font-weight:bold;fill:#3f86d0">0:00:00:00</text>
<text x="12" y="789" textLength="82" lengthAdjust="spacingAndGlyphs" style="fill:#24527f">00000 (25.00 fps)</text>
<rect x="107.500" y="767.500" width="411" height="19" rx="2" fill="#161616" stroke="#2a2a2a"/>
<circle cx="121" cy="775" r="3.800" fill="none" stroke="#a0a0a0" stroke-width="1.1"/><path d="M118 778l-3 4" stroke="#a0a0a0" stroke-width="1.2"/><path d="M126 778h5l-2.500 2.500z" fill="#a0a0a0"/>
<path d="M535 773h6v3h-6zM541 774.500h5v8h3M546 777h3" fill="none" stroke="#b5b5b5" stroke-width="1.3"/><path d="M548 785h4l-2 2z" fill="#b5b5b5"/>
<path d="M569 778h16v7h-16zM577 771a3 3 0 013 3v4h-6v-4a3 3 0 013-3z" fill="#a8a8a8"/><path d="M571 780.500h12" stroke="#232323"/>
<path d="M596 774h4v12h-4zM601 770h9v14h-9z" fill="#a8a8a8"/><path d="M603 773h5M603 777h5M603 781h5" stroke="#232323"/>
<circle cx="628" cy="779" r="6" fill="#8f8f8f"/><circle cx="631" cy="776" r="5.500" fill="#bdbdbd"/>
<path d="M656 772h15v14h-15zM660 770v2M667 770v2M658 783q5 0 6-4t6-4" fill="none" stroke="#a8a8a8" stroke-width="1.1"/>
<rect x="0" y="795" width="687" height="1" fill="#0f0f0f"/>
<rect x="0" y="796" width="687" height="18" fill="#2e2e2e"/>
<rect x="0" y="814" width="1680" height="1" fill="#0a0a0a"/>
<use href="#eye" x="8" y="801"/>
<path d="M22 803h3l5-3v11l-5-3h-3zM31 802v7M33 801v9" stroke="#a5a5a5" fill="#a5a5a5" stroke-width=".8"/>
<circle cx="43" cy="805.500" r="3.500" fill="#b0b0b0"/>
<rect x="53" y="804" width="9" height="7" fill="#b0b0b0"/><path d="M55 804v-2a2.500 2.500 0 015 0v2" fill="none" stroke="#b0b0b0" stroke-width="1.300"/>
<path d="M69.500 799v13M101.500 799v13M134.500 799v13M384.500 799v13M550.500 799v13M671.500 799v13" stroke="#151515"/>
<path d="M82 800h7l6 6-6 6h-1l-6-6z" fill="#b0b0b0"/>
<text class="h" x="107" y="808">#</text><text class="h" x="122" y="808">.</text>
<text class="h" x="140" y="808" textLength="53" lengthAdjust="spacingAndGlyphs">Source Name</text>
<text class="h" x="390" y="808" textLength="22" lengthAdjust="spacingAndGlyphs">Mode</text>
<text class="h" x="466" y="808">T</text>
<text class="h" x="482" y="808" textLength="30" lengthAdjust="spacingAndGlyphs">.TrkMat</text>
<text class="h" x="556" y="808" textLength="54" lengthAdjust="spacingAndGlyphs">Parent &amp; Link</text>
<!-- layer rows -->
<rect x="0" y="815" width="687" height="17" fill="#272727"/>
<rect x="0" y="833" width="687" height="16" fill="#363636"/>
<rect x="0" y="849" width="687" height="1" fill="#1a1a1a"/>
<path d="M36 816h14v15H36zM51 816h14v15H51zM36 834h14v14H36zM51 834h14v14H51z" fill="#2b2b2b"/>
<use href="#eye" x="8" y="819"/><use href="#eye" x="8" y="836"/>
<path d="M22 838h3l5-3v11l-5-3h-3zM31 837v7M33 836v9" stroke="#a5a5a5" fill="#a5a5a5" stroke-width=".8"/>
<path d="M76 820l4 4-4 4M76 838l4 4-4 4" fill="none" stroke="#8a8a8a"/>
<rect x="87" y="818" width="12" height="11" fill="#aaa5c6"/>
<rect x="87" y="836" width="12" height="11" fill="#a6cfc6"/>
<text x="108" y="827" textLength="6" lengthAdjust="spacingAndGlyphs" style="fill:#a8a8a8">1</text>
<text x="108" y="843" textLength="6" lengthAdjust="spacingAndGlyphs" style="fill:#a8a8a8">2</text>
<rect x="138.500" y="817.500" width="13" height="12" fill="#fff" stroke="#000"/>
<text x="157" y="827" textLength="101" lengthAdjust="spacingAndGlyphs" style="fill:#a5a5a5;font-weight:bold;font-size:11px">Adjustment Layer 1</text>
<rect x="153" y="833" width="231" height="16" fill="#8e8e8e"/>
<g transform="translate(138 835) scale(.95)"><use href="#cone"/></g>
<text x="157" y="844" textLength="178" lengthAdjust="spacingAndGlyphs" style="fill:#181818">A001C012_150101DE_CANON.MXF</text>
<rect x="388" y="816" width="68" height="16" fill="#1c1c1c"/>
<text x="395" y="827" textLength="36" lengthAdjust="spacingAndGlyphs" style="fill:#aaa">Normal</text>
<rect x="388" y="833" width="68" height="16" fill="#1c1c1c"/>
<text x="395" y="844" textLength="36" lengthAdjust="spacingAndGlyphs" style="fill:#aaa">Normal</text>
<use href="#chev" x="446" y="822"/><use href="#chev" x="446" y="839"/>
<rect x="462" y="816" width="13" height="16" fill="#202020"/><rect x="462" y="833" width="17" height="16" fill="#2a2a2a"/>
<rect x="481" y="833" width="65" height="16" fill="#1c1c1c"/>
<text x="488" y="844" textLength="25" lengthAdjust="spacingAndGlyphs" style="fill:#aaa">None</text>
<use href="#chev" x="534" y="839"/>
<use href="#spiral" x="556" y="817"/><use href="#spiral" x="556" y="835"/>
<rect x="574" y="816" width="93" height="16" fill="#1c1c1c"/>
<text x="581" y="827" textLength="25" lengthAdjust="spacingAndGlyphs" style="fill:#aaa">None</text>
<rect x="574" y="833" width="93" height="16" fill="#1c1c1c"/>
<text x="581" y="844" textLength="25" lengthAdjust="spacingAndGlyphs" style="fill:#aaa">None</text>
<use href="#chev" x="654" y="822"/><use href="#chev" x="654" y="839"/>
<rect x="687" y="732" width="1" height="270" fill="#0d0d0d"/>
<!-- right timeline -->
<rect x="688" y="815" width="966" height="187" fill="#2d2d2d"/>
<rect x="690" y="765" width="971" height="1" fill="#0a0a0a"/>
<rect x="690" y="766" width="971" height="8" fill="#6d6d6d"/>
<rect x="690" y="774" width="971" height="1" fill="#0a0a0a"/>
<rect x="688" y="775" width="973" height="19" fill="#232323"/>
<rect x="688" y="794" width="973" height="1" fill="#0a0a0a"/>
<path d="M690 774v-5a3 3 0 013-3h3v8z" fill="#2f86e0"/>
<path d="M1654 766h3a4 4 0 010 8h-3z" fill="#2f86e0"/>
<g>
<text x="692" y="786" textLength="16" lengthAdjust="spacingAndGlyphs" style="font-size:10.500px;fill:#9a9a9a">00s</text>
<text x="784" y="786" textLength="16" lengthAdjust="spacingAndGlyphs" style="font-size:10.500px;fill:#9a9a9a">02s</text>
<text x="881" y="786" textLength="16" lengthAdjust="spacingAndGlyphs" style="font-size:10.500px;fill:#9a9a9a">04s</text>
<text x="979" y="786" textLength="16" lengthAdjust="spacingAndGlyphs" style="font-size:10.500px;fill:#9a9a9a">06s</text>
<text x="1076" y="786" textLength="16" lengthAdjust="spacingAndGlyphs" style="font-size:10.500px;fill:#9a9a9a">08s</text>
<text x="1173" y="786" textLength="16" lengthAdjust="spacingAndGlyphs" style="font-size:10.500px;fill:#9a9a9a">10s</text>
<text x="1271" y="786" textLength="16" lengthAdjust="spacingAndGlyphs" style="font-size:10.500px;fill:#9a9a9a">12s</text>
<text x="1368" y="786" textLength="16" lengthAdjust="spacingAndGlyphs" style="font-size:10.500px;fill:#9a9a9a">14s</text>
<text x="1466" y="786" textLength="16" lengthAdjust="spacingAndGlyphs" style="font-size:10.500px;fill:#9a9a9a">16s</text>
<text x="1563" y="786" textLength="16" lengthAdjust="spacingAndGlyphs" style="font-size:10.500px;fill:#9a9a9a">18s</text>
</g>
<path d="M793 789.500v5M890.500 789.500v5M988 789.500v5M1085.500 789.500v5M1183 789.500v5M1280.500 789.500v5M1378 789.500v5M1475 789.500v5M1572.500 789.500v5" stroke="#8a8a8a"/>
<rect x="690" y="795" width="964" height="15" fill="#636363"/>
<rect x="688" y="810" width="973" height="1" fill="#0a0a0a"/>
<rect x="688" y="811" width="973" height="3" fill="#232323"/>
<path d="M696 795h-3a3 3 0 00-3 3v9a3 3 0 003 3h3z" fill="#2f86e0"/>
<path d="M1654 795h3a3 3 0 013 3v9a3 3 0 01-3 3h-3z" fill="#2f86e0"/>
<rect x="696" y="815" width="958" height="16" fill="#72707f"/>
<rect x="696" y="832" width="965" height="15" fill="url(#gteal)"/>
<rect x="688" y="831" width="966" height="1" fill="#1f1f1f"/>
<rect x="688" y="847" width="973" height="1" fill="#1f1f1f"/>
<path d="M696 832h4l-4 5z" fill="#222"/>
<rect x="695" y="786" width="1" height="216" fill="#2f86e0"/>
<path d="M690 785h11v5l-5.500 8-5.500-8z" fill="#2f86e0"/>
<path d="M1665 797h11v10l-5.500 4-5.500-4z" fill="#b5b5b5"/>
<path d="M1663 823l6-6 0 3h8v7h-8" fill="#b5b5b5"/><circle cx="1668.500" cy="826" r="3.500" fill="#232323" stroke="#b5b5b5"/>
<!-- bottom bar -->
<rect x="0" y="1001" width="800" height="1" fill="#0a0a0a"/>
<rect x="0" y="1002" width="1680" height="18" fill="#232323"/>
<path d="M9 1005h7v10H9zM12 1008h7v10h-7z" fill="#232323" stroke="#a8a8a8"/>
<rect x="24" y="1003" width="16" height="16" fill="#1a1f26"/>
<circle cx="30" cy="1009" r="4" fill="none" stroke="#3f83c9" stroke-width="1.3"/><rect x="31" y="1010" width="7" height="8" fill="none" stroke="#3f83c9" stroke-width="1.3"/>
<path d="M44 1007l3-3v4h3v-4l3 3v6l-3 3v-3h-3v3l-3-3z" fill="#a0a0a0"/>
<rect x="387" y="1003" width="163" height="15" rx="2" fill="#272727" stroke="#303030"/>
<text x="406" y="1015" textLength="123" lengthAdjust="spacingAndGlyphs">Toggle Switches / Modes</text>
<polygon points="693,1013 702,1013 697.500,1008" fill="#b5b5b5"/>
<circle cx="718" cy="1011" r="4" fill="#232323" stroke="#a8a8a8" stroke-width="1.5"/>
<rect x="722" y="1010" width="40" height="2" fill="#3a3a3a"/>
<polygon points="774,1014 790,1014 782,1006" fill="#b5b5b5"/>
</svg>
</body></html>
